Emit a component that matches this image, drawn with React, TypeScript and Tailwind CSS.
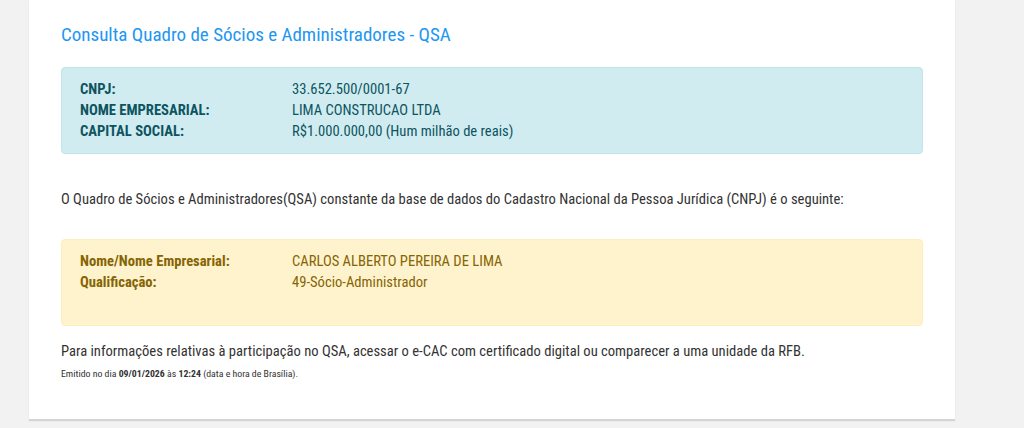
const empresa = [
  { label: 'CNPJ:', value: '33.652.500/0001-67' },
  { label: 'NOME EMPRESARIAL:', value: 'LIMA CONSTRUCAO LTDA' },
  { label: 'CAPITAL SOCIAL:', value: 'R$1.000.000,00 (Hum milhão de reais)' },
];

const socio = [
  { label: 'Nome/Nome Empresarial:', value: 'CARLOS ALBERTO PEREIRA DE LIMA' },
  { label: 'Qualificação:', value: '49-Sócio-Administrador' },
];

export default function App() {
  return (
    <div className="min-h-[428px] bg-[#f2f2f2] font-['Roboto_Condensed','Roboto',sans-serif] font-stretch-condensed text-[14.6px] text-[#333]">
      <div className="ml-[29px] w-[926px] h-[419px] bg-white px-8 pt-[22px] shadow-[0_2px_1px_rgba(0,0,0,0.12)]">
        <h2 className="text-[19px] leading-[26px] text-[#2196f3]">
          Consulta Quadro de Sócios e Administradores - QSA
        </h2>

        <div className="mt-[19px] h-[87px] rounded-[4px] border border-[#bee5eb] bg-[#d1ecf1] px-[18px] pt-[11px] text-[#0c5460]">
          {empresa.map((row) => (
            <div key={row.label} className="flex leading-[21px]">
              <span className="w-[212px] font-bold">{row.label}</span>
              <span>{row.value}</span>
            </div>
          ))}
        </div>

        <p className="mt-[35px] leading-[21px]">
          O Quadro de Sócios e Administradores(QSA) constante da base de dados do Cadastro Nacional da Pessoa Jurídica (CNPJ) é o seguinte:
        </p>

        <div className="mt-[29px] h-[87px] rounded-[4px] border border-[#ffeeba] bg-[#fff3cd] px-[18px] pt-[11px] text-[#856404]">
          {socio.map((row) => (
            <div key={row.label} className="flex leading-[21px]">
              <span className="w-[212px] font-bold">{row.label}</span>
              <span>{row.value}</span>
            </div>
          ))}
        </div>

        <p className="mt-[15px] leading-[21px]">
          Para informações relativas à participação no QSA, acessar o e-CAC com certificado digital ou comparecer a uma unidade da RFB.
        </p>
        <p className="mt-[5px] text-[9.8px] leading-[14px]">
          Emitido no dia <b>09/01/2026</b> às <b>12:24</b> (data e hora de Brasília).
        </p>
      </div>
    </div>
  );
}
